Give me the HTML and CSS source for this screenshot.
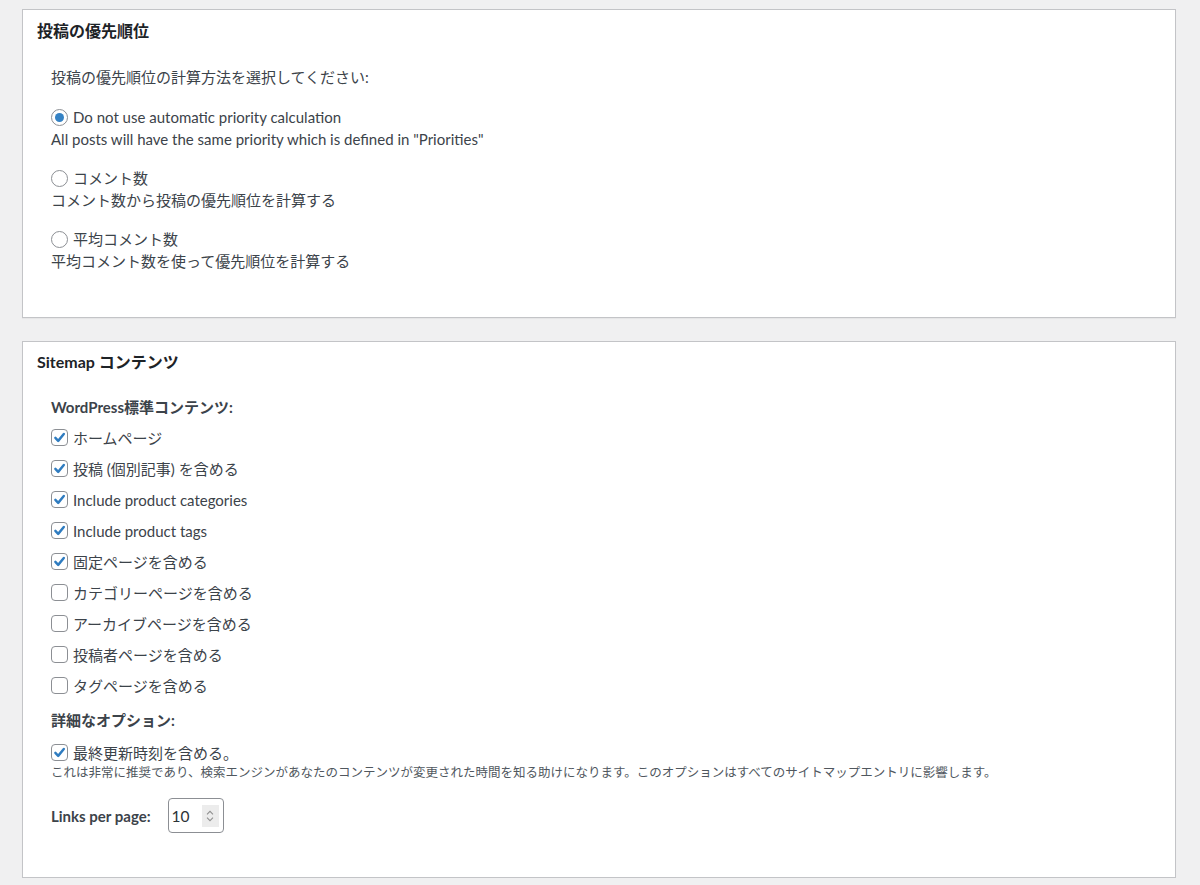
FILE: index.html
```html
<!DOCTYPE html>
<html lang="ja">
<head>
<meta charset="utf-8">
<title>Sitemap settings</title>
<link rel="stylesheet" href="styles.css">
</head>
<body>
<div class="wrap">
  <section class="panel panel-priority">
    <h2 class="panel-title">投稿の優先順位</h2>
    <div class="panel-body">
      <p class="intro">投稿の優先順位の計算方法を選択してください:</p>
      <div class="radio-group">
        <div class="option">
          <label class="choice"><span class="radio checked"></span>Do not use automatic priority calculation</label>
          <div class="desc">All posts will have the same priority which is defined in "Priorities"</div>
        </div>
        <div class="option">
          <label class="choice"><span class="radio"></span>コメント数</label>
          <div class="desc">コメント数から投稿の優先順位を計算する</div>
        </div>
        <div class="option">
          <label class="choice"><span class="radio"></span>平均コメント数</label>
          <div class="desc">平均コメント数を使って優先順位を計算する</div>
        </div>
      </div>
    </div>
  </section>

  <section class="panel panel-content">
    <h2 class="panel-title">Sitemap コンテンツ</h2>
    <div class="panel-body">
      <h3 class="sub">WordPress標準コンテンツ:</h3>
      <ul class="checklist">
        <li><span class="check checked"><svg viewBox="0 0 16 16"><path d="M3.6 8.4 L6.6 11.6 L12.6 4.2"/></svg></span>ホームページ</li>
        <li><span class="check checked"><svg viewBox="0 0 16 16"><path d="M3.6 8.4 L6.6 11.6 L12.6 4.2"/></svg></span>投稿 (個別記事) を含める</li>
        <li><span class="check checked"><svg viewBox="0 0 16 16"><path d="M3.6 8.4 L6.6 11.6 L12.6 4.2"/></svg></span>Include product categories</li>
        <li><span class="check checked"><svg viewBox="0 0 16 16"><path d="M3.6 8.4 L6.6 11.6 L12.6 4.2"/></svg></span>Include product tags</li>
        <li><span class="check checked"><svg viewBox="0 0 16 16"><path d="M3.6 8.4 L6.6 11.6 L12.6 4.2"/></svg></span>固定ページを含める</li>
        <li><span class="check"></span>カテゴリーページを含める</li>
        <li><span class="check"></span>アーカイブページを含める</li>
        <li><span class="check"></span>投稿者ページを含める</li>
        <li><span class="check"></span>タグページを含める</li>
      </ul>
      <h3 class="sub sub-advanced">詳細なオプション:</h3>
      <div class="lastmod"><span class="check checked"><svg viewBox="0 0 16 16"><path d="M3.6 8.4 L6.6 11.6 L12.6 4.2"/></svg></span>最終更新時刻を含める。</div>
      <p class="note">これは非常に推奨であり、検索エンジンがあなたのコンテンツが変更された時間を知る助けになります。このオプションはすべてのサイトマップエントリに影響します。</p>
      <div class="links-row">
        <span class="links-label">Links per page:</span>
        <div class="number-input">
          <span class="number-value">10</span>
          <span class="spinner"><svg viewBox="0 0 14 20"><path d="M3.5 8 L7 4.5 L10.5 8 M3.5 12 L7 15.5 L10.5 12"/></svg></span>
        </div>
      </div>
    </div>
  </section>
</div>
</body>
</html>
```
FILE: styles.css
```css
html, body {
  margin: 0;
  padding: 0;
  background: #f0f0f1;
}
body {
  font-family: Lato, "Noto Sans CJK JP", sans-serif;
  color: #3c434a;
  font-size: 15px;
}
.wrap {
  padding: 9px 24px 0 22px;
  display: flex;
  flex-direction: column;
  gap: 23px;
}
.panel {
  background: #fff;
  border: 1px solid #c3c4c7;
  box-shadow: 0 1px 1px rgba(0,0,0,0.04);
}
.panel-priority { height: 307px; }
.panel-content { height: 535px; }
.panel-title {
  margin: 0;
  padding: 10px 14px 0;
  font-size: 16px;
  line-height: 22px;
  font-weight: 700;
  color: #1d2327;
}
.panel-content .panel-title { padding-top: 9px; }
.panel-body {
  padding: 0 28px;
}
.intro {
  margin: 24px 0 0;
  line-height: 22px;
}
.radio-group {
  margin-top: 18px;
  display: flex;
  flex-direction: column;
  gap: 17px;
}
.option { line-height: 22px; }
.choice {
  display: flex;
  align-items: center;
  gap: 5px;
  height: 22px;
}
.radio {
  box-sizing: border-box;
  width: 17px;
  height: 17px;
  border: 1px solid #8c8f94;
  border-radius: 50%;
  display: flex;
  align-items: center;
  justify-content: center;
  flex: none;
}
.radio.checked::before {
  content: "";
  width: 9px;
  height: 9px;
  border-radius: 50%;
  background: #3582c4;
}
.desc { height: 22px; }
.sub {
  margin: 23px 0 0;
  font-size: 15px;
  font-weight: 700;
  line-height: 22px;
  color: #3c434a;
}
.checklist {
  list-style: none;
  margin: 4px 0 0;
  padding: 0;
}
.checklist li {
  height: 31px;
  display: flex;
  align-items: center;
  gap: 5px;
}
.check {
  box-sizing: border-box;
  width: 17px;
  height: 17px;
  border: 1px solid #8c8f94;
  border-radius: 4px;
  flex: none;
  display: flex;
  background: #fff;
}
.check svg {
  width: 15px;
  height: 15px;
}
.check svg path {
  fill: none;
  stroke: #2f7cc0;
  stroke-width: 2.6;
  stroke-linecap: round;
  stroke-linejoin: round;
}
.sub-advanced { margin-top: 8px; }
.lastmod {
  margin-top: 10px;
  height: 22px;
  display: flex;
  align-items: center;
  gap: 5px;
}
.note {
  margin: 1px 0 0;
  font-size: 12.5px;
  line-height: 18px;
  color: #50575e;
}
.links-row {
  margin-top: 16px;
  display: flex;
  align-items: center;
  gap: 17px;
}
.links-label {
  font-weight: 700;
  font-size: 15px;
}
.number-input {
  box-sizing: border-box;
  width: 56px;
  height: 35px;
  border: 1px solid #8c8f94;
  border-radius: 4px;
  display: flex;
  align-items: center;
  padding: 0 4px 0 3px;
  justify-content: space-between;
}
.number-value {
  font-size: 15.5px;
  color: #2c3338;
}
.spinner {
  width: 17px;
  height: 22px;
  background: #ececec;
  display: flex;
  align-items: center;
  justify-content: center;
}
.spinner svg {
  width: 12px;
  height: 18px;
}
.spinner svg path {
  fill: none;
  stroke: #8f8f8f;
  stroke-width: 1.2;
}
```
